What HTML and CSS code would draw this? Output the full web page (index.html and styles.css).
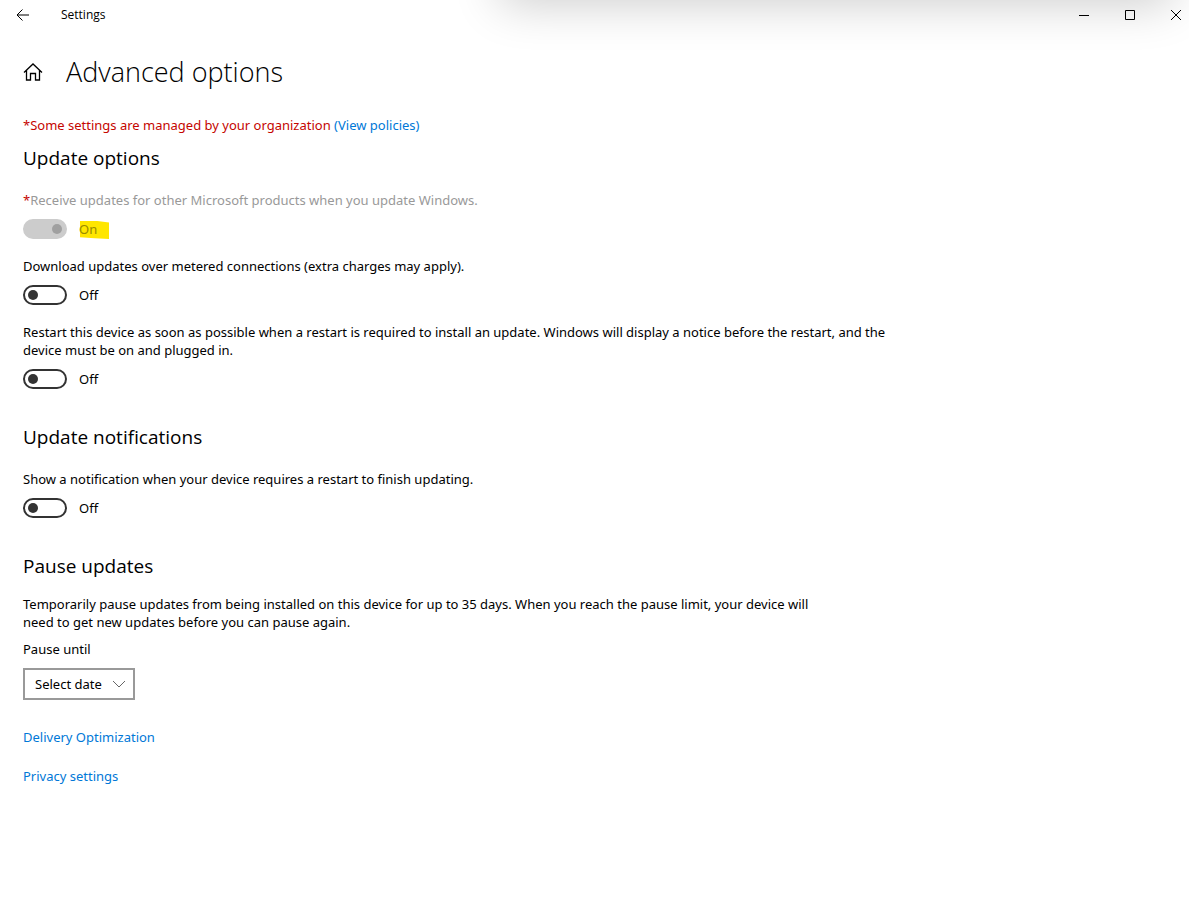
FILE: index.html
```
<!DOCTYPE html>
<html lang="en">
  <head>
    <meta charset="utf-8">
    <meta name="viewport" content="width=device-width, initial-scale=1">
    <title>Settings</title>
    <link rel="stylesheet" href="styles.css">
  </head>
  <body>
    <div class="window-shadow"></div>
    <header class="titlebar">
      <button class="back" type="button" aria-label="Back">
        <svg width="14" height="12" viewBox="0 0 14 12"><path d="M6.500 .5L1 6l5.500 5.500M1 6h12"/></svg>
      </button>
      <span class="app-name">Settings</span>
      <div class="window-controls">
        <button type="button" aria-label="Minimize">
          <svg width="11" height="11" viewBox="0 0 11 11"><path d="M0 5.500h10"/></svg>
        </button>
        <button type="button" aria-label="Maximize">
          <svg width="11" height="11" viewBox="0 0 11 11"><path d="M.5 .5h9v9h-9z"/></svg>
        </button>
        <button type="button" aria-label="Close">
          <svg width="11" height="11" viewBox="0 0 11 11"><path d="M0 0l10 10M10 0l-10 10"/></svg>
        </button>
      </div>
    </header>
    <main>
      <div class="page-title">
        <a class="home" href="#" aria-label="Home">
          <svg width="20" height="18" viewBox="0 0 20 18"><path d="M1 9.500L10 1l9 8.500M3.500 7.500v9.500h4v-6.500h5v6.500h4v-9.500"/></svg>
        </a>
        <h1>Advanced options</h1>
      </div>

      <p class="policy">*Some settings are managed by your organization <a href="#">(View policies)</a></p>

      <section>
        <h2>Update options</h2>
        <div class="setting disabled">
          <label for="other-products"><span class="star">*</span>Receive updates for other Microsoft products when you update Windows.</label>
          <div class="toggle-row">
            <input type="checkbox" class="toggle" id="other-products" checked disabled>
            <span class="state highlight">On</span>
          </div>
        </div>
        <div class="setting">
          <label for="metered">Download updates over metered connections (extra charges may apply).</label>
          <div class="toggle-row">
            <input type="checkbox" class="toggle" id="metered">
            <span class="state">Off</span>
          </div>
        </div>
        <div class="setting">
          <label for="restart">Restart this device as soon as possible when a restart is required to install an update. Windows will display a notice before the restart, and the device must be on and plugged in.</label>
          <div class="toggle-row">
            <input type="checkbox" class="toggle" id="restart">
            <span class="state">Off</span>
          </div>
        </div>
      </section>

      <section>
        <h2>Update notifications</h2>
        <div class="setting">
          <label for="notify">Show a notification when your device requires a restart to finish updating.</label>
          <div class="toggle-row">
            <input type="checkbox" class="toggle" id="notify">
            <span class="state">Off</span>
          </div>
        </div>
      </section>

      <section class="pause">
        <h2>Pause updates</h2>
        <p>Temporarily pause updates from being installed on this device for up to 35 days. When you reach the pause limit, your device will need to get new updates before you can pause again.</p>
        <label for="pause-until">Pause until</label>
        <div class="select">
          <select id="pause-until">
            <option>Select date</option>
          </select>
          <svg width="14" height="8" viewBox="0 0 14 8"><path d="M1 1l6 6 6-6"/></svg>
        </div>
      </section>

      <nav class="links">
        <a href="#">Delivery Optimization</a>
        <a href="#">Privacy settings</a>
      </nav>
    </main>
  </body>
</html>
```
FILE: styles.css
```
* {
  box-sizing: border-box;
}
body {
  margin: 0;
  background: #fff;
  color: #000;
  font-family: "Segoe UI", "Noto Sans", sans-serif;
  font-size: 13px;
  line-height: 18px;
}
h1, h2, p {
  margin: 0;
}
h1, h2, .app-name {
  font-family: "Segoe UI", "Open Sans", sans-serif;
}
a {
  color: #0078d7;
  text-decoration: none;
}
a:hover {
  color: #666;
}
svg {
  display: block;
  fill: none;
  stroke: #000;
}
button {
  display: flex;
  align-items: center;
  justify-content: center;
  padding: 0;
  border: none;
  background: transparent;
}

/* Soft shadow cast by the window above */
.window-shadow {
  position: absolute;
  top: 0;
  left: 0;
  right: 0;
  height: 70px;
  overflow: hidden;
  pointer-events: none;
}
.window-shadow::before {
  content: "";
  position: absolute;
  top: -68px;
  left: 500px;
  right: 16px;
  height: 60px;
  box-shadow: 0 12px 48px rgba(0, 0, 0, 0.2);
}

.titlebar {
  position: relative;
  display: flex;
  align-items: center;
  height: 30px;
}
.back {
  width: 46px;
  height: 30px;
}
.app-name {
  margin-left: 15px;
  font-size: 12px;
  line-height: 20px;
}
.window-controls {
  display: flex;
  margin-left: auto;
  margin-right: -10px;
}
.window-controls button {
  width: 46px;
  height: 30px;
}

main {
  max-width: 920px;
  padding: 21px 23px;
}
.page-title {
  display: flex;
  align-items: center;
  gap: 23px;
  height: 42px;
  margin-bottom: 23px;
}
.home svg {
  stroke-width: 1.3;
}
h1 {
  font-size: 27px;
  font-weight: 300;
  line-height: 42px;
}
h2 {
  margin-bottom: 21px;
  font-size: 19px;
  font-weight: 400;
  line-height: 24px;
}
.policy {
  margin-bottom: 12px;
  color: #c50500;
}
section {
  margin-bottom: 36px;
}

.setting {
  margin-bottom: 18px;
}
.setting label {
  display: block;
  margin-bottom: 10px;
}
.star {
  color: #c50500;
}
.disabled {
  color: #999;
}
.toggle-row {
  display: flex;
  align-items: center;
  gap: 12px;
  height: 20px;
}
.toggle {
  appearance: none;
  display: flex;
  align-items: center;
  width: 44px;
  height: 20px;
  margin: 0;
  padding: 0 3px;
  border: 2px solid #333;
  border-radius: 10px;
}
.toggle::before {
  content: "";
  width: 10px;
  height: 10px;
  border-radius: 50%;
  background: #333;
}
.toggle:checked {
  justify-content: flex-end;
}
.toggle:disabled {
  border-color: #ccc;
  background: #ccc;
}
.toggle:disabled::before {
  background: #a0a0a0;
}
/* Marker stroke, slightly uneven */
.highlight {
  position: relative;
  z-index: 0;
  width: 30px;
  color: #998a00;
}
.highlight::before {
  content: "";
  position: absolute;
  inset: 1px 0 -1px 1px;
  z-index: -1;
  background: #ffe600;
  clip-path: polygon(0 0, 60% 0, 100% 8%, 100% 100%, 50% 96%, 0 90%);
}

.pause {
  margin-bottom: 28px;
}
.pause h2 {
  margin-bottom: 17px;
}
.pause p {
  max-width: 810px;
  margin-bottom: 9px;
}
.pause label {
  display: block;
  margin-bottom: 10px;
}
.select {
  display: grid;
  align-items: center;
  width: 112px;
}
.select select,
.select svg {
  grid-area: 1 / 1;
}
.select select {
  appearance: none;
  height: 32px;
  padding: 0 10px;
  border: 2px solid #999;
  border-radius: 0;
  background: #fff;
  color: #000;
  font: inherit;
}
.select svg {
  justify-self: end;
  margin-right: 9px;
  stroke: #666;
  pointer-events: none;
}

.links {
  display: flex;
  flex-direction: column;
  align-items: flex-start;
  gap: 21px;
}
```
